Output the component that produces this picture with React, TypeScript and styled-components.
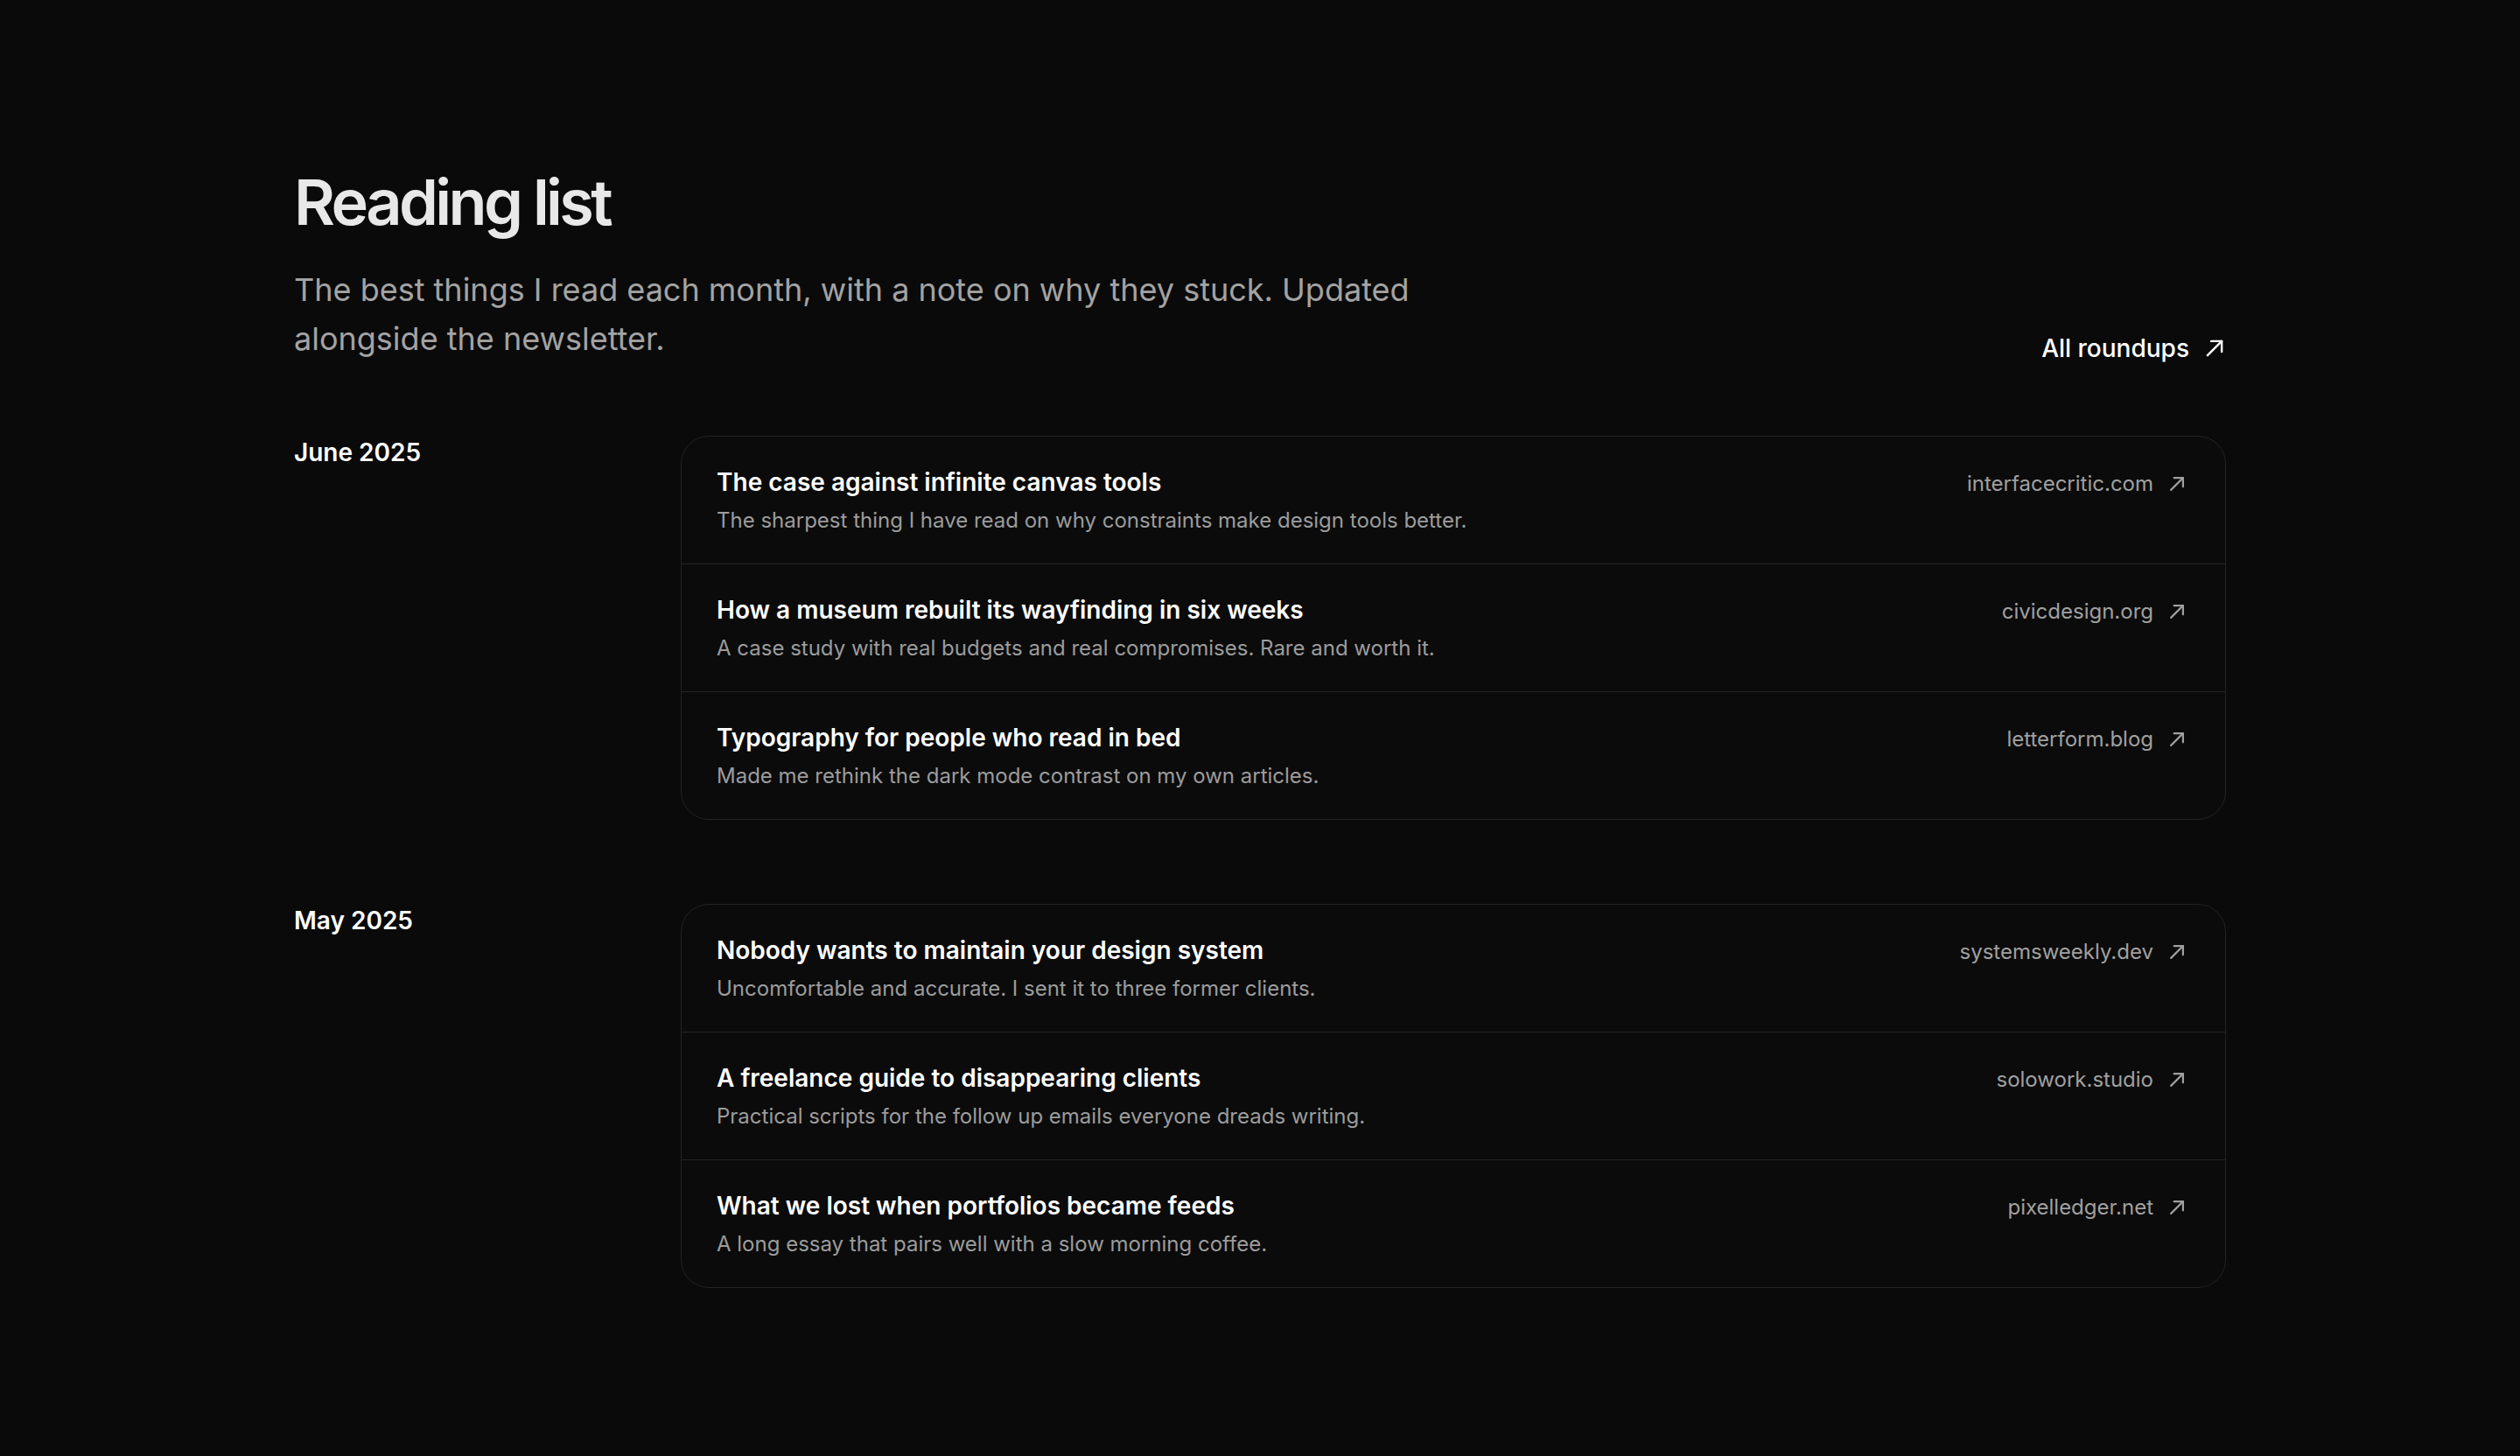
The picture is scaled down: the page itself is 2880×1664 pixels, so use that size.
import React from 'react'
import styled, { createGlobalStyle } from 'styled-components'

type Pick = {
  title: string
  note: string
  domain: string
}

type Month = {
  label: string
  picks: Pick[]
}

const months: Month[] = [
  {
    label: 'June 2025',
    picks: [
      {
        title: 'The case against infinite canvas tools',
        note: 'The sharpest thing I have read on why constraints make design tools better.',
        domain: 'interfacecritic.com',
      },
      {
        title: 'How a museum rebuilt its wayfinding in six weeks',
        note: 'A case study with real budgets and real compromises. Rare and worth it.',
        domain: 'civicdesign.org',
      },
      {
        title: 'Typography for people who read in bed',
        note: 'Made me rethink the dark mode contrast on my own articles.',
        domain: 'letterform.blog',
      },
    ],
  },
  {
    label: 'May 2025',
    picks: [
      {
        title: 'Nobody wants to maintain your design system',
        note: 'Uncomfortable and accurate. I sent it to three former clients.',
        domain: 'systemsweekly.dev',
      },
      {
        title: 'A freelance guide to disappearing clients',
        note: 'Practical scripts for the follow up emails everyone dreads writing.',
        domain: 'solowork.studio',
      },
      {
        title: 'What we lost when portfolios became feeds',
        note: 'A long essay that pairs well with a slow morning coffee.',
        domain: 'pixelledger.net',
      },
    ],
  },
]

const Arrow = ({ size, weight }: { size: number; weight: number }) => (
  <svg
    width={size}
    height={size}
    viewBox='0 0 16 16'
    fill='none'
    stroke='currentColor'
    strokeWidth={weight}
    strokeLinecap='round'
    strokeLinejoin='round'
  >
    <path d='M3 13L13 3' />
    <path d='M5.6 3H13v7.4' />
  </svg>
)

const App = () => {
  return (
    <>
      <GlobalStyle />
      <Page>
        <Header>
          <Intro>
            <Title>Reading list</Title>
            <Lead>
              The best things I read each month, with a note on why they stuck. Updated
              alongside the newsletter.
            </Lead>
          </Intro>
          <AllLink href='#'>
            All roundups
            <Arrow size={26} weight={1.5} />
          </AllLink>
        </Header>

        <Sections>
          {months.map((month) => (
            <Section key={month.label}>
              <MonthLabel>{month.label}</MonthLabel>
              <Card>
                {month.picks.map((pick) => (
                  <Row key={pick.title}>
                    <RowText>
                      <PickTitle>{pick.title}</PickTitle>
                      <PickNote>{pick.note}</PickNote>
                    </RowText>
                    <Domain href='#'>
                      {pick.domain}
                      <Arrow size={22} weight={1.6} />
                    </Domain>
                  </Row>
                ))}
              </Card>
            </Section>
          ))}
        </Sections>
      </Page>
    </>
  )
}

const GlobalStyle = createGlobalStyle`
  html, body {
    margin: 0;
    padding: 0;
    background: #0a0a0a;
  }
  body {
    min-height: 100vh;
    font-family: Inter, 'Noto Sans', sans-serif;
    color: #fafafa;
    -webkit-font-smoothing: antialiased;
  }
  a {
    color: inherit;
    text-decoration: none;
  }
`

const Page = styled.main`
  width: 2208px;
  margin: 0 auto;
  padding: 191px 0 160px;
`

const Header = styled.header`
  display: flex;
  justify-content: space-between;
  align-items: flex-end;
  margin-bottom: 83px;
`

const Intro = styled.div`
  display: flex;
  flex-direction: column;
  gap: 33px;
`

const Title = styled.h1`
  margin: 0;
  font-size: 72px;
  line-height: 1.1;
  font-weight: 600;
  letter-spacing: -0.05em;
  color: #e8e8e8;
`

const Lead = styled.p`
  margin: 0;
  max-width: 1360px;
  font-size: 36px;
  line-height: 56px;
  font-weight: 400;
  color: #a3a3a3;
`

const AllLink = styled.a`
  display: inline-flex;
  align-items: center;
  gap: 16px;
  margin-bottom: -4px;
  font-size: 28px;
  line-height: 42px;
  font-weight: 500;
  color: #ffffff;
`

const Sections = styled.div`
  display: flex;
  flex-direction: column;
  gap: 96px;
`

const Section = styled.section`
  display: grid;
  grid-template-columns: 442px 1fr;
  align-items: start;
`

const MonthLabel = styled.h2`
  margin: 0;
  font-size: 28px;
  line-height: 39px;
  font-weight: 600;
  color: #ffffff;
`

const Card = styled.div`
  border: 1px solid #232323;
  border-radius: 32px;
  background: #0b0b0b;
  overflow: hidden;
`

const Row = styled.div`
  display: flex;
  justify-content: space-between;
  align-items: baseline;
  gap: 40px;
  padding: 33px 44px 31px 40px;

  & + & {
    border-top: 1px solid #232323;
  }
`

const RowText = styled.div`
  display: flex;
  flex-direction: column;
  gap: 6px;
`

const PickTitle = styled.h3`
  margin: 0;
  font-size: 28px;
  line-height: 39px;
  font-weight: 600;
  color: #ffffff;
`

const PickNote = styled.p`
  margin: 0;
  font-size: 24px;
  line-height: 36px;
  color: #9c9c9c;
`

const Domain = styled.a`
  display: inline-flex;
  align-items: center;
  gap: 16px;
  flex-shrink: 0;
  font-size: 24px;
  line-height: 39px;
  color: #a0a0a0;
`

export default App
